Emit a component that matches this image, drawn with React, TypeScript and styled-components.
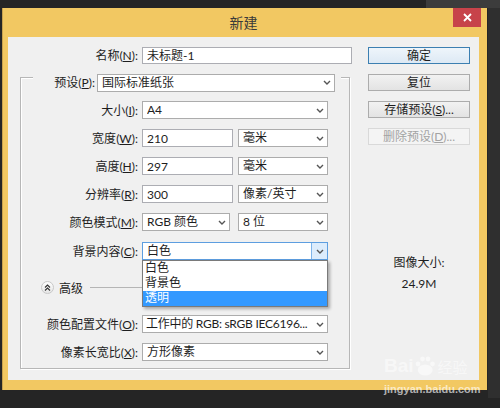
import React from "react";
import styled, { createGlobalStyle } from "styled-components";

const Global = createGlobalStyle`
  html, body { margin: 0; padding: 0; }
  body {
    background: #262626;
    font-family: "Lato", "Noto Sans CJK SC", sans-serif;
  }
  #root { width: 500px; height: 408px; }
`;

const Screen = styled.div`
  position: relative;
  width: 500px;
  height: 408px;
  overflow: hidden;
  box-sizing: border-box;
  padding: 8px 0 0 2px;
  background:
    linear-gradient(#3c3c3c, #3c3c3c) no-repeat 426px 0 / 74px 8px,
    linear-gradient(#2f2f2f, #2f2f2f) no-repeat 488px 8px / 12px 390px,
    #252525;
`;

const Dialog = styled.div`
  width: 485px;
  height: 382px;
  box-sizing: border-box;
  background: #f2c862;
  border-left: 1px solid #c9a24e;
  padding: 0 8px 10px 5px;
  display: flex;
  flex-direction: column;
`;

const TitleBar = styled.div`
  height: 29px;
  display: grid;
  grid-template-columns: 1fr auto 1fr;
  align-items: start;
`;

const Title = styled.div`
  grid-column: 2;
  font-size: 14px;
  line-height: 29px;
  color: #3a3a3a;
`;

const CloseButton = styled.div`
  grid-column: 3;
  justify-self: end;
  margin-right: -2px;
  width: 28px;
  height: 19px;
  background: #c7434a;
  display: flex;
  align-items: center;
  justify-content: center;
`;

const Client = styled.div`
  flex: 1;
  background: #f0f0f0;
  display: flex;
  padding: 10px 0 0 12px;
  box-sizing: border-box;
  font-size: 12px;
  color: #1e1e1e;
`;

const LeftCol = styled.div`
  width: 334px;
  display: flex;
  flex-direction: column;
`;

const NameRow = styled.div`
  display: flex;
  align-items: center;
  height: 17px;
`;

const Label = styled.div<{ $w: number }>`
  width: ${(p) => p.$w}px;
  flex: none;
  text-align: right;
  white-space: nowrap;
  line-height: 17px;
  color: #1e1e1e;
  u { text-decoration: underline; text-underline-offset: 1px; }
`;

const TextInput = styled.div<{ $w: number; $inRow?: boolean }>`
  width: ${(p) => p.$w}px;
  height: ${(p) => (p.$inRow ? 18 : 17)}px;
  margin-left: ${(p) => (p.$inRow ? 0 : 4)}px;
  box-sizing: border-box;
  border: 1px solid #acadb3;
  background: #fff;
  padding-left: 4px;
  display: flex;
  align-items: center;
  line-height: 15px;
  white-space: nowrap;
  overflow: hidden;
`;

const GroupBox = styled.div`
  margin-top: 13px;
  width: 330px;
  height: 292px;
  box-sizing: border-box;
  border: 1px solid #b7b7b7;
  box-shadow: inset 1px 1px 0 #fff, 1px 1px 0 #fff;
  display: flex;
  flex-direction: column;
`;

const PresetRow = styled.div`
  margin: -4px 0 0 12px;
  width: 308px;
  height: 17px;
  background: #f0f0f0;
  display: flex;
  align-items: center;
`;

const Controls = styled.div<{ $w?: number; $ml?: number }>`
  width: ${(p) => p.$w ?? 186}px;
  margin-left: ${(p) => p.$ml ?? 4}px;
  display: flex;
  justify-content: space-between;
  align-items: center;
  position: relative;
`;

const FieldRow = styled.div<{ $mt: number }>`
  margin-top: ${(p) => p.$mt}px;
  height: 18px;
  display: flex;
  align-items: center;
`;

const Select = styled.div<{ $w: number; $focus?: boolean; $tight?: boolean }>`
  width: ${(p) => p.$w}px;
  height: 18px;
  box-sizing: border-box;
  border: 1px solid ${(p) => (p.$focus ? "#5d9ee0" : "#acacac")};
  background: #fff;
  display: flex;
  align-items: center;
  padding-left: ${(p) => (p.$tight ? 3 : 4)}px;
  line-height: 16px;
  letter-spacing: ${(p) => (p.$tight ? "-0.25px" : "normal")};
  white-space: nowrap;
  overflow: hidden;
`;

const SelectText = styled.span`
  flex: 1;
  overflow: hidden;
`;

const ArrowBox = styled.span<{ $focus?: boolean }>`
  width: 15px;
  flex: none;
  align-self: stretch;
  display: flex;
  align-items: center;
  justify-content: center;
  background: ${(p) => (p.$focus ? "#dcecfc" : "transparent")};
  border-left: 1px solid ${(p) => (p.$focus ? "#7eb4ea" : "transparent")};
`;

const DropList = styled.div`
  position: absolute;
  top: 18px;
  left: 0;
  width: 186px;
  box-sizing: border-box;
  border: 1px solid #7a7a7a;
  background: #fff;
  box-shadow: 2px 2px 3px rgba(0, 0, 0, 0.3);
  z-index: 2;
`;

const DropItem = styled.div<{ $sel?: boolean }>`
  height: 15px;
  line-height: 14px;
  font-size: 12px;
  overflow: hidden;
  padding-left: 2px;
  background: ${(p) => (p.$sel ? "#3399ff" : "#fff")};
  color: ${(p) => (p.$sel ? "#fff" : "#1e1e1e")};
`;

const AdvancedRow = styled.div`
  margin-top: 19px;
  height: 16px;
  display: flex;
  align-items: center;
  padding-left: 20px;
`;

const AdvIcon = styled.div`
  width: 13px;
  height: 13px;
  border-radius: 50%;
  border: 1px solid #c8c8c8;
  background: linear-gradient(#fdfdfd, #e6e6e6);
  box-sizing: border-box;
  display: flex;
  align-items: center;
  justify-content: center;
`;

const AdvText = styled.span`
  margin-left: 5px;
  font-size: 12px;
`;

const AdvLine = styled.div`
  margin-left: 7px;
  width: 54px;
  height: 1px;
  background: #b5b5b5;
`;

const RightCol = styled.div`
  margin-left: 14px;
  width: 102px;
  display: flex;
  flex-direction: column;
`;

const Buttons = styled.div`
  display: flex;
  flex-direction: column;
  gap: 10px;
`;

const Button = styled.div<{ $variant?: "default" | "disabled" }>`
  height: 17px;
  box-sizing: border-box;
  border: 1px solid
    ${(p) => (p.$variant === "default" ? "#3c7fb1" : p.$variant === "disabled" ? "#d9d9d9" : "#acacac")};
  background: ${(p) =>
    p.$variant === "disabled"
      ? "#f4f4f4"
      : p.$variant === "default"
      ? "linear-gradient(#eef5fb, #dde9f4)"
      : "linear-gradient(#f2f2f2, #e3e3e3)"};
  color: ${(p) => (p.$variant === "disabled" ? "#a3a3a3" : "#1e1e1e")};
  text-align: center;
  line-height: 15px;
  font-size: 12px;
  white-space: nowrap;
  u { text-decoration: underline; }
`;

const SizeInfo = styled.div`
  margin-top: 110px;
  text-align: center;
  display: flex;
  flex-direction: column;
  gap: 6px;
  line-height: 15px;
  color: #1e1e1e;
`;

const Watermark = styled.div`
  position: absolute;
  left: 384px;
  top: 354px;
  pointer-events: none;
  display: flex;
  flex-direction: column;
  align-items: flex-start;
`;

const WmTop = styled.div`
  display: flex;
  align-items: flex-end;
  font-family: "Liberation Sans", "Noto Sans CJK SC", sans-serif;
  font-size: 19px;
  font-weight: bold;
  line-height: 20px;
  color: rgba(255, 255, 255, 0.5);
`;

const WmCn = styled.span`
  font-size: 15px;
  line-height: 17px;
  margin-left: 2px;
  font-weight: normal;
`;

const WmUrl = styled.div`
  font-family: "Liberation Sans", sans-serif;
  font-size: 11px;
  font-weight: bold;
  line-height: 13px;
  margin-top: 7px;
  color: rgba(255, 255, 255, 0.65);
`;

const Chevron = () => (
  <svg width="8" height="5" viewBox="0 0 8 5">
    <path d="M1 1 L4 4 L7 1" fill="none" stroke="#555" strokeWidth="1.4" />
  </svg>
);

const SelectBox: React.FC<{ w: number; text: string; focus?: boolean; tight?: boolean }> = ({
  w,
  text,
  focus,
  tight,
}) => (
  <Select $w={w} $focus={focus} $tight={tight}>
    <SelectText>{text}</SelectText>
    <ArrowBox $focus={focus}>
      <Chevron />
    </ArrowBox>
  </Select>
);

const L: React.FC<{ t: string; k: string; w?: number }> = ({ t, k, w = 117 }) => (
  <Label $w={w}>
    {t}(<u>{k}</u>):
  </Label>
);

export default function App() {
  return (
    <>
      <Global />
      <Screen>
        <Dialog>
          <TitleBar>
            <Title>新建</Title>
            <CloseButton>
              <svg width="9" height="9" viewBox="0 0 9 9">
                <path d="M1 1 L8 8 M8 1 L1 8" stroke="#fff" strokeWidth="1.8" />
              </svg>
            </CloseButton>
          </TitleBar>
          <Client>
            <LeftCol>
              <NameRow>
                <L t="名称" k="N" w={118} />
                <TextInput $w={210}>未标题-1</TextInput>
              </NameRow>
              <GroupBox>
                <PresetRow>
                  <L t="预设" k="P" w={62} />
                  <Controls $w={238} $ml={2}>
                    <SelectBox w={238} text="国际标准纸张" />
                  </Controls>
                </PresetRow>
                <FieldRow $mt={10}>
                  <L t="大小" k="I" />
                  <Controls>
                    <SelectBox w={186} text="A4" />
                  </Controls>
                </FieldRow>
                <FieldRow $mt={10}>
                  <L t="宽度" k="W" />
                  <Controls>
                    <TextInput $w={91} $inRow>210</TextInput>
                    <SelectBox w={90} text="毫米" />
                  </Controls>
                </FieldRow>
                <FieldRow $mt={10}>
                  <L t="高度" k="H" />
                  <Controls>
                    <TextInput $w={91} $inRow>297</TextInput>
                    <SelectBox w={90} text="毫米" />
                  </Controls>
                </FieldRow>
                <FieldRow $mt={10}>
                  <L t="分辨率" k="R" />
                  <Controls>
                    <TextInput $w={91} $inRow>300</TextInput>
                    <SelectBox w={90} text="像素/英寸" />
                  </Controls>
                </FieldRow>
                <FieldRow $mt={10}>
                  <L t="颜色模式" k="M" />
                  <Controls>
                    <SelectBox w={88} text="RGB 颜色" />
                    <SelectBox w={90} text="8 位" />
                  </Controls>
                </FieldRow>
                <FieldRow $mt={11}>
                  <L t="背景内容" k="C" />
                  <Controls>
                    <SelectBox w={186} text="白色" focus />
                    <DropList>
                      <DropItem>白色</DropItem>
                      <DropItem>背景色</DropItem>
                      <DropItem $sel>透明</DropItem>
                    </DropList>
                  </Controls>
                </FieldRow>
                <AdvancedRow>
                  <AdvIcon>
                    <svg width="7" height="7" viewBox="0 0 7 7">
                      <path d="M1 3.5 L3.5 1 L6 3.5 M1 6.5 L3.5 4 L6 6.5" fill="none" stroke="#333" strokeWidth="1.1" />
                    </svg>
                  </AdvIcon>
                  <AdvText>高级</AdvText>
                  <AdvLine />
                </AdvancedRow>
                <FieldRow $mt={20}>
                  <L t="颜色配置文件" k="O" />
                  <Controls>
                    <SelectBox w={186} text="工作中的 RGB: sRGB IEC6196..." tight />
                  </Controls>
                </FieldRow>
                <FieldRow $mt={10}>
                  <L t="像素长宽比" k="X" />
                  <Controls>
                    <SelectBox w={186} text="方形像素" />
                  </Controls>
                </FieldRow>
              </GroupBox>
            </LeftCol>
            <RightCol>
              <Buttons>
                <Button $variant="default">确定</Button>
                <Button>复位</Button>
                <Button>
                  存储预设(<u>S</u>)...
                </Button>
                <Button $variant="disabled">
                  删除预设(<u>D</u>)...
                </Button>
              </Buttons>
              <SizeInfo>
                <span>图像大小:</span>
                <span>24.9M</span>
              </SizeInfo>
            </RightCol>
          </Client>
        </Dialog>
        <Watermark>
          <WmTop>
            Bai
            <svg width="22" height="22" viewBox="0 0 22 22">
              <circle cx="4" cy="10" r="2.4" fill="rgba(255,255,255,0.5)" />
              <circle cx="8.5" cy="5" r="2.4" fill="rgba(255,255,255,0.5)" />
              <circle cx="14" cy="5" r="2.4" fill="rgba(255,255,255,0.5)" />
              <circle cx="18.5" cy="10" r="2.4" fill="rgba(255,255,255,0.5)" />
              <ellipse cx="11.2" cy="16" rx="7.5" ry="5.5" fill="rgba(255,255,255,0.5)" />
            </svg>
            <WmCn>经验</WmCn>
          </WmTop>
          <WmUrl>jingyan.baidu.com</WmUrl>
        </Watermark>
      </Screen>
    </>
  );
}
